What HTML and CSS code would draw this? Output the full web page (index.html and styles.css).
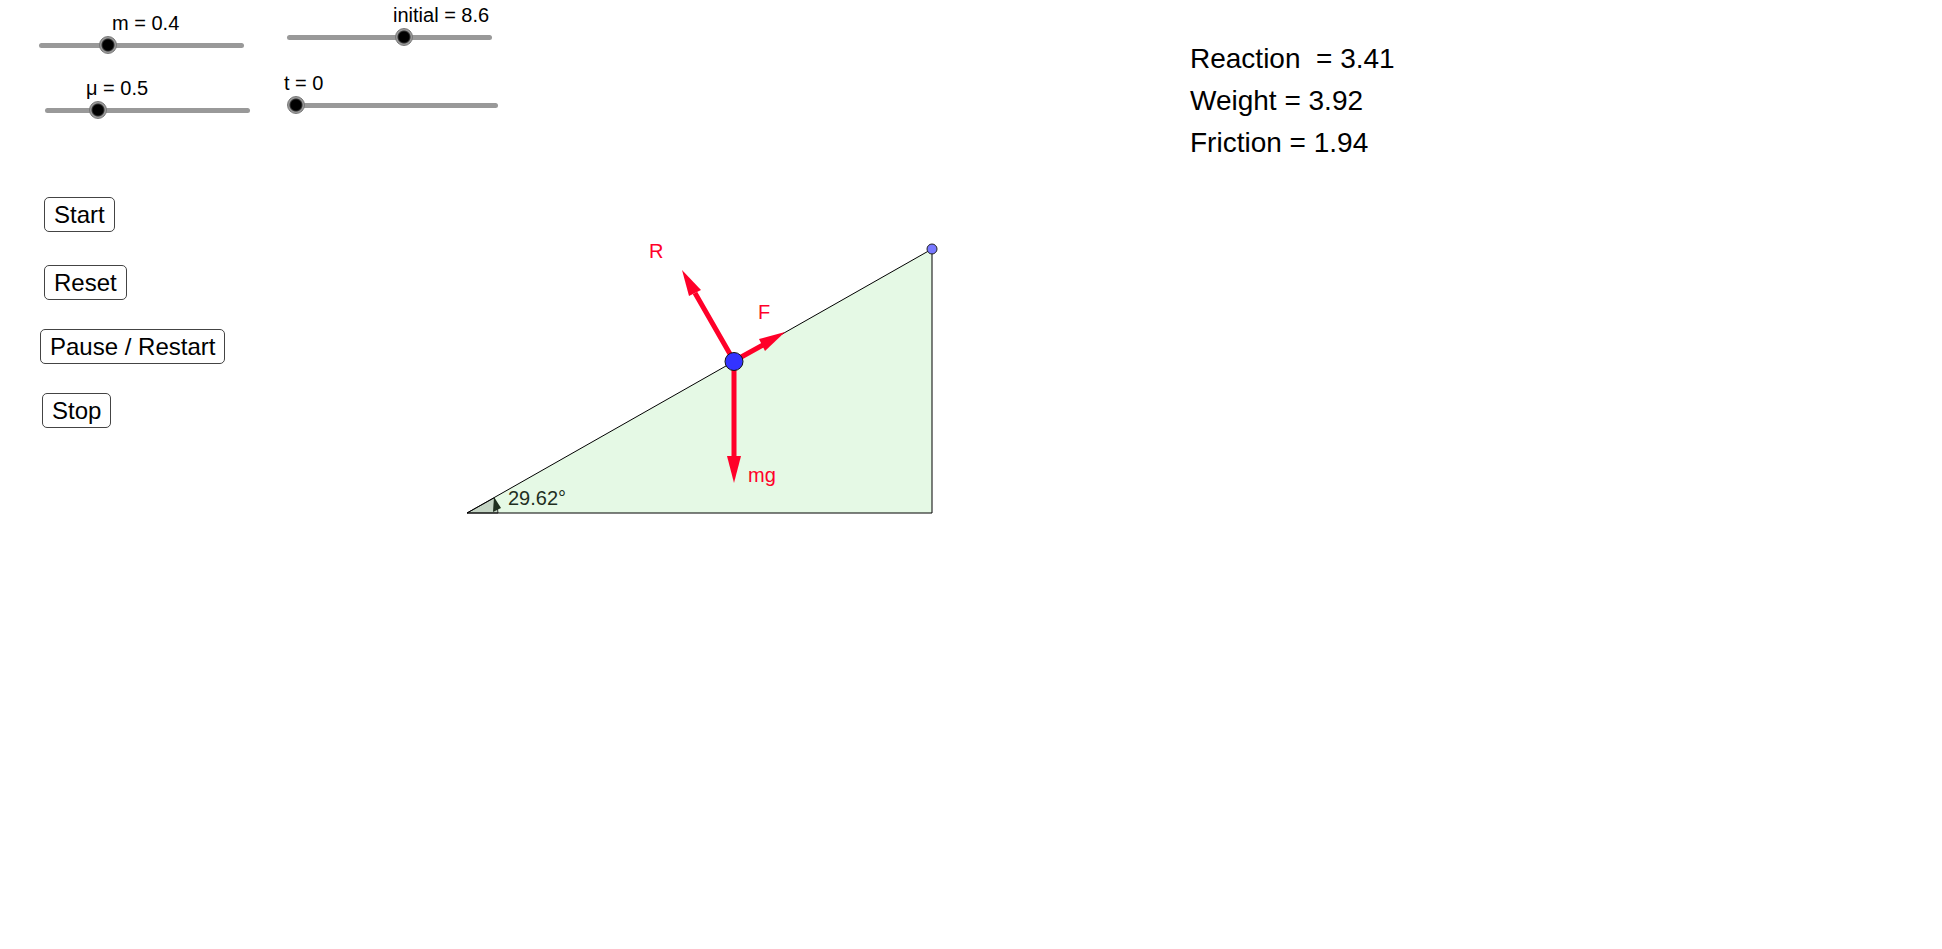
FILE: index.html
```html
<!DOCTYPE html>
<html lang="en">
<head>
<meta charset="utf-8">
<title>Forces on an inclined plane</title>
<link rel="stylesheet" href="styles.css">
</head>
<body>
<main class="page">
  <div class="workspace">
    <div class="sliders">
      <div class="slider-column slider-column-first">
        <div class="slider">
          <label class="slider-label label-mass" for="mass">m = 0.4</label>
          <div class="rail"><input class="range" id="mass" type="range" min="0" max="1200" step="1" value="400"></div>
        </div>
        <div class="slider indented">
          <label class="slider-label label-mu" for="mu">μ = 0.5</label>
          <div class="rail"><input class="range" id="mu" type="range" min="0" max="200" step="1" value="50"></div>
        </div>
      </div>
      <div class="slider-column slider-column-second">
        <div class="slider">
          <label class="slider-label label-initial" for="initial">initial = 8.6</label>
          <div class="rail"><input class="range" id="initial" type="range" min="0" max="15" step="0.1" value="8.6"></div>
        </div>
        <div class="slider indented">
          <label class="slider-label label-time" for="time">t = 0</label>
          <div class="rail"><input class="range" id="time" type="range" min="0" max="10" step="0.1" value="0"></div>
        </div>
      </div>
    </div>
    <div class="scene">
      <div class="buttons">
        <button class="button button-start" type="button">Start</button>
        <button class="button button-reset" type="button">Reset</button>
        <button class="button button-pause" type="button">Pause / Restart</button>
        <button class="button button-stop" type="button">Stop</button>
      </div>
      <svg class="diagram" width="480" height="280" viewBox="460 240 480 280" role="img" aria-label="Block on an incline with its forces">
        <path class="plane-fill" d="M467 513H932V249Z"/>
        <path class="angle" d="M467 513H498A30 30 0 0 0 494 498Z"/>
        <path class="plane-edge" d="M467 513H932V249Z"/>
        <path class="angle-head" d="M494 497L501 508L493 512Z"/>
        <text class="angle-text" x="508" y="505">29.62°</text>
        <g class="force">
          <path class="shaft" d="M734 361L695 293M734 361L763 345M734 361V458"/>
          <path d="M682 270L701 290L689 296Z"/>
          <path d="M785 332L765 351L759 339Z"/>
          <path d="M734 483L727 456H741Z"/>
          <text x="649" y="258">R</text>
          <text x="758" y="319">F</text>
          <text x="748" y="482">mg</text>
        </g>
        <circle class="block" cx="734" cy="361.500" r="9"/>
        <circle class="apex" cx="932" cy="249" r="5"/>
      </svg>
    </div>
  </div>
  <div class="readouts">
    <div class="readout">Reaction  = 3.41</div>
    <div class="readout">Weight = 3.92</div>
    <div class="readout">Friction = 1.94</div>
  </div>
</main>
</body>
</html>
```
FILE: styles.css
```css
body {
  margin: 0;
  background: #fff;
  color: #000;
  font-family: "Liberation Sans", Arial, sans-serif;
}

.page {
  display: grid;
  grid-template-columns: 1190fr 752fr;
  align-items: start;
}

.sliders {
  display: flex;
  gap: 37px;
  padding-left: 39px;
}

.slider-column {
  display: flex;
  flex-direction: column;
  width: 211px;
}

.slider-column-first {
  gap: 28px;
  padding-top: 11px;
}

.slider-column-second {
  gap: 31px;
  padding-top: 3px;
}

.slider {
  width: 205px;
}

.indented {
  margin-left: 6px;
}

.slider-label {
  display: block;
  margin-bottom: 8px;
  font-size: 20px;
  line-height: 24px;
  white-space: nowrap;
}

.label-mass {
  margin-left: 73px;
}

.label-mu {
  margin-left: 41px;
}

.label-initial {
  margin-left: 106px;
}

.label-time {
  margin-left: -9px;
}

.rail {
  display: flow-root;
  height: 5px;
  border-radius: 3px;
  background: #999;
}

.range {
  appearance: none;
  display: block;
  width: calc(100% + 12px);
  height: 18px;
  margin: -7px -6px;
  background: transparent;
}

.range::-webkit-slider-thumb {
  appearance: none;
  box-sizing: border-box;
  width: 18px;
  height: 18px;
  border: 1px solid #777;
  border-radius: 50%;
  background: radial-gradient(circle, #000 5px, #333 6px, #999 7px);
}

.scene {
  display: grid;
  grid-template-columns: 421fr 730fr;
  margin-top: 83px;
  padding-left: 39px;
}

.buttons {
  display: flex;
  flex-direction: column;
  align-items: flex-start;
  gap: 29px;
  padding-top: 1px;
}

.button {
  height: 35px;
  padding: 0 9px;
  border: 1px solid #444;
  border-radius: 5px;
  background: #fff;
  color: #000;
  font: 24px/32px "Liberation Sans", Arial, sans-serif;
}

.button-start {
  margin: 0 0 4px 5px;
}

.button-reset {
  margin-left: 5px;
}

.button-pause {
  margin-left: 1px;
}

.button-stop {
  margin-left: 3px;
}

.diagram {
  display: block;
  margin-top: 44px;
}

.plane-fill {
  fill: #e5f9e5;
}

.plane-edge {
  fill: none;
  stroke: #000;
  stroke-width: 1;
}

.angle {
  fill: #c4d4c4;
  stroke: #333;
}

.angle-head {
  fill: #1f2f1f;
}

.angle-text {
  fill: #1f2f1f;
  font-size: 20px;
}

.force {
  fill: #ff0029;
  font-size: 20px;
}

.shaft {
  fill: none;
  stroke: #ff0029;
  stroke-width: 5;
}

.block {
  fill: #3333ff;
  stroke: #111;
}

.apex {
  fill: #7878ff;
  stroke: #222;
}

.readouts {
  padding-top: 38px;
}

.readout {
  font-size: 28px;
  line-height: 42px;
  white-space: pre;
}
```
